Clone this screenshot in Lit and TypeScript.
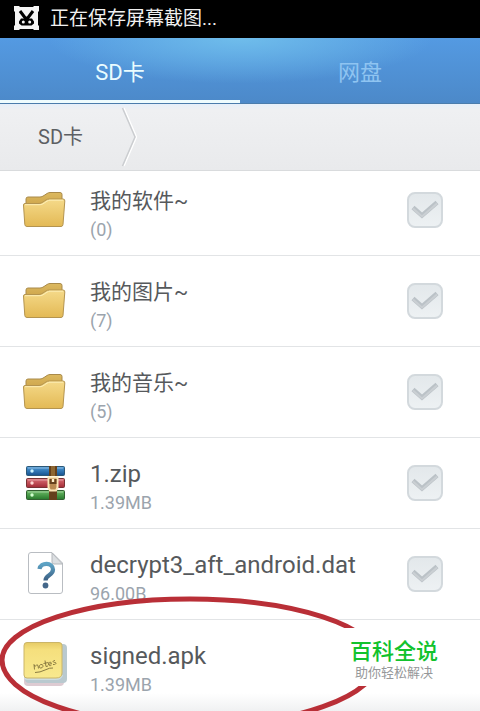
import { LitElement, html, css, svg } from "lit";
import { customElement, property } from "lit/decorators.js";

type Kind = "folder" | "zip" | "unknown" | "notes";

interface Entry {
  name: string;
  info: string;
  kind: Kind;
}

const entries: Entry[] = [
  { name: "我的软件~", info: "(0)", kind: "folder" },
  { name: "我的图片~", info: "(7)", kind: "folder" },
  { name: "我的音乐~", info: "(5)", kind: "folder" },
  { name: "1.zip", info: "1.39MB", kind: "zip" },
  { name: "decrypt3_aft_android.dat", info: "96.00B", kind: "unknown" },
  { name: "signed.apk", info: "1.39MB", kind: "notes" },
];

const folder = svg`
  <defs>
    <linearGradient id="front" x1="0" y1="0" x2="0" y2="1">
      <stop offset="0" stop-color="#f5da8a"/><stop offset="1" stop-color="#e3b955"/>
    </linearGradient>
    <linearGradient id="back" x1="0" y1="0" x2="0" y2="1">
      <stop offset="0" stop-color="#dcb960"/><stop offset="1" stop-color="#c3963b"/>
    </linearGradient>
  </defs>
  <path d="M4 30V13q0-2 2-2H18q2 0 4-1.500l3-2q1.500-1 3-1H38q2 0 2 2V30z" fill="url(#back)" stroke="#a98a4a"/>
  <path d="M1.500 19q0-1.500 1.500-1.500H17q2 0 4-1.500l3-2q1.500-1 3.500-1H41q2 0 1.800 2L41 38.500q-.2 2-2 2H5q-2 0-2.200-2z" fill="url(#front)" stroke="#b4944f"/>
  <path d="M3 18.700H18q2 0 4-1.500l3-2q1.500-1 3-1H41" fill="none" stroke="#fdeeb5"/>`;

const zip = svg`
  <defs>
    <linearGradient id="blue" x1="0" y1="0" x2="0" y2="1"><stop offset="0" stop-color="#4d9bd8"/><stop offset="1" stop-color="#17528f"/></linearGradient>
    <linearGradient id="red" x1="0" y1="0" x2="0" y2="1"><stop offset="0" stop-color="#dc7076"/><stop offset="1" stop-color="#a22b36"/></linearGradient>
    <linearGradient id="green" x1="0" y1="0" x2="0" y2="1"><stop offset="0" stop-color="#6ebd68"/><stop offset="1" stop-color="#26792c"/></linearGradient>
  </defs>
  <g transform="translate(0 2)">
    <rect x="4.500" y="5.500" width="38" height="9" rx="1" fill="url(#blue)" stroke="#2d5877"/>
    <rect x="4.500" y="17.500" width="38" height="9" rx="1" fill="url(#red)" stroke="#773234"/>
    <rect x="4.500" y="29.500" width="38" height="9" rx="1" fill="url(#green)" stroke="#315e30"/>
    <path d="M6 7h35M6 19h35M6 31h35" stroke="#fff" stroke-opacity=".4"/>
    <circle cx="10" cy="10" r="1.700" fill="#c9f3ff"/><circle cx="10" cy="22" r="1.700" fill="#ffd9d4"/><circle cx="10" cy="34" r="1.700" fill="#d2ffd0"/>
    <path d="M27 5h8v10h-8zM27 29h8v10h-8z" fill="#64401c"/>
    <path d="M29 5h4v10h-4z" fill="#8d6632"/>
    <path d="M26.500 16.500h9v10l-1.500 3h-6l-1.500-3z" fill="#b98a50" stroke="#fbe5b5" stroke-width="2"/>
    <path d="M28.500 18v4h5v-4" fill="none" stroke="#65411d" stroke-width="2"/>
    <path d="M31 18v3" stroke="#fff0cc" stroke-width="2"/>
  </g>`;

const unknown = svg`
  <defs>
    <linearGradient id="mark" x1="0" y1="0" x2="0" y2="1"><stop offset="0" stop-color="#5da3c5"/><stop offset="1" stop-color="#3c6084"/></linearGradient>
  </defs>
  <path d="M9 2.500H30L40.500 13V41q0 2.500-2.500 2.500H9q-2.500 0-2.500-2.500V5q0-2.500 2.500-2.500z" fill="#fff" stroke="#b9bdc2"/>
  <path d="M30 3v9q0 2 2 2h8.500z" fill="#dcdfe2" stroke="#b4b8bc"/>
  <path d="M17.500 19c1-7 13.500-7 13.500.500 0 6-7.500 5.500-7.500 11" fill="none" stroke="url(#mark)" stroke-width="4.200"/>
  <circle cx="23.500" cy="35.500" r="2.900" fill="#44678a"/>`;

const notes = svg`
  <defs>
    <linearGradient id="paper" x1="0" y1="0" x2="0" y2="1"><stop offset="0" stop-color="#e6cb66"/><stop offset=".2" stop-color="#f5df7d"/><stop offset="1" stop-color="#f8e98e"/></linearGradient>
  </defs>
  <rect x="2" y="5" width="40" height="40" rx="4" fill="#ddcbd2"/>
  <rect x="3" y="3" width="42" height="39" rx="4" fill="#b9c9cf"/>
  <path d="M2 34h39q-1 5-8 5H5q-3 0-3-3z" fill="#cddde1"/>
  <path d="M5 1.500H37q3 0 3 3V32q0 5-6 5H5q-3 0-3-3V4.500q0-3 3-3z" fill="url(#paper)" stroke="#cbb568"/>
  <path d="M12.500 28.500l-.500-5 1 2q2-3 3-1l.500 3M19 23.500c-2 0-2.500 4 0 3.500 3-.500 2.500-4 0-3.500M23 19.500l1 6 2-.500M21.500 22.500l5-1M26.500 23.500l3-1c0-2-3-1.500-3 .500s2 2 3 1M33 19.500c-3 .200-2 2 0 2s1 2.500-2 2M13 31.500q5 0 10-2.500t8-2" fill="none" stroke="#8b7c42"/>`;

const drawings = { folder, zip, unknown, notes };

@customElement("file-row")
export class FileRow extends LitElement {
  @property({ attribute: false }) entry!: Entry;

  static styles = css`
    :host { display: block; }
    .row {
      display: grid;
      grid-template-columns: 48px 1fr 36px;
      align-items: center;
      column-gap: 20px;
      box-sizing: border-box;
      height: 91px;
      padding: 0 37px 0 22px;
      border-bottom: 1px solid #e2e4e6;
      cursor: pointer;
    }
    .icon { display: block; width: 48px; height: 48px; }
    .text { display: flex; flex-direction: column; min-width: 0; padding-top: 8px; }
    .name { font-size: 24px; line-height: 32px; color: #56595c; white-space: nowrap; }
    .name:lang(zh) { font-size: 21px; }
    .info { font-size: 18px; line-height: 26px; color: #9ba4ad; }
    .tick {
      appearance: none;
      width: 36px;
      height: 36px;
      margin: 0;
      border: 2px solid #d3d9dd;
      border-radius: 8px;
      background: linear-gradient(#e3e8eb, #edf1f3);
    }
    .box { display: grid; }
    .box > * { grid-area: 1 / 1; }
    .check { width: 36px; height: 36px; pointer-events: none; }
  `;

  render() {
    const { name, info, kind } = this.entry;
    return html`
      <label class="row">
        <svg class="icon" viewBox="0 0 48 48" aria-hidden="true">${drawings[kind]}</svg>
        <span class="text">
          <span class="name" lang=${kind === "folder" ? "zh" : "en"}>${name}</span>
          <span class="info">${info}</span>
        </span>
        <span class="box">
          <input class="tick" type="checkbox" />
          <svg class="check" viewBox="0 0 36 36" aria-hidden="true">
            <path d="M6 15.500L15 23.500 30 10.500" fill="none" stroke="#bbc2c7" stroke-width="4.500" />
            <path d="M6 16.500L15 24.500 30 11.500" fill="none" stroke="#cacfd3" stroke-width="2" />
          </svg>
        </span>
      </label>
    `;
  }
}

@customElement("app-root")
export class AppRoot extends LitElement {
  static styles = css`
    :host {
      display: block;
      position: relative;
      min-height: 100vh;
      overflow: hidden;
      background: #fff;
      font-family: Roboto, "Noto Sans CJK SC", sans-serif;
    }
    .status {
      display: flex;
      align-items: center;
      gap: 11px;
      height: 38px;
      padding: 0 14px;
      background: #000;
      color: #f0f0f0;
      font-size: 19px;
      line-height: 36px;
    }
    .badge { width: 25px; height: 26px; margin-bottom: 2px; }
    .tabs {
      display: grid;
      grid-template-columns: 1fr 1fr;
      height: 66px;
      background:
        radial-gradient(ellipse 40% 70% at 50% 0, #6fbdeb, transparent),
        linear-gradient(#549ae2, #4c89c9);
      border-bottom: 1px solid #4a7cac;
      box-sizing: border-box;
    }
    .tab {
      border: 0;
      border-bottom: 3px solid transparent;
      padding: 7px 0 0;
      background: none;
      font: 22px/32px Roboto, "Noto Sans CJK SC", sans-serif;
      color: #8fc4f1;
    }
    .current { color: #eafcff; border-bottom-color: #eefcff; }
    .crumbs {
      position: relative;
      z-index: 1;
      display: flex;
      align-items: center;
      box-sizing: border-box;
      height: 67px;
      padding-left: 38px;
      gap: 38px;
      background: linear-gradient(#e6effa, #eff0f2 6px, #e9eaec);
      border-bottom: 1px solid #d9dbdd;
    }
    .crumb { font-size: 20px; line-height: 28px; color: #5c5f63; text-decoration: none; }
    .chevron { width: 16px; height: 60px; }
    .list { list-style: none; margin: -6px 0 0; padding: 0; }
    .list li:last-child { height: 86px; overflow: hidden; }
    .fade {
      position: absolute;
      inset: auto 0 0;
      height: 18px;
      background: linear-gradient(transparent, #f0f1f2);
    }
    .ring { position: absolute; left: 0; top: 590px; width: 400px; height: 150px; pointer-events: none; }
    .mark {
      position: absolute;
      left: 344px;
      top: 628px;
      display: flex;
      flex-direction: column;
      align-items: center;
      width: 100px;
      height: 58px;
      background: #fff;
    }
    .brand { margin: 10px 0 0; font-size: 22px; line-height: 28px; font-weight: 500; color: #12c22d; }
    .motto { margin: 0; font-size: 13px; line-height: 14px; color: #96989a; white-space: nowrap; }
  `;

  render() {
    return html`
      <header>
        <div class="status">
          <svg class="badge" viewBox="0 0 25 26" aria-hidden="true">
            <path d="M0 1h5l1 1h13l1-1h5v5l-1 1v13l1 1v4h-5l-1-1H6l-1 1H0v-4l1-1V7L0 6z" fill="#f5f5f5" />
            <path d="M6 6l6 8M19 6l-6 8" stroke="#000" stroke-width="3" />
            <path d="M12.500 11.500l2.500 2h3l2 3v2L17.500 20.500h-10L5 18.500v-2l2-3h3z" fill="#000" />
            <circle cx="9.300" cy="17" r="1.500" fill="#f5f5f5" /><circle cx="15.700" cy="17" r="1.500" fill="#f5f5f5" />
          </svg>
          <span>正在保存屏幕截图...</span>
        </div>
        <nav class="tabs">
          <button class="tab current">SD卡</button>
          <button class="tab">网盘</button>
        </nav>
        <nav class="crumbs">
          <a class="crumb" href="#">SD卡</a>
          <svg class="chevron" viewBox="0 0 16 60" aria-hidden="true">
            <path d="M3 1L15.500 30 3 59" fill="none" stroke="#fff" stroke-width="1.500" />
            <path d="M1.500 1L14 30 1.500 59" fill="none" stroke="#cbcdd0" stroke-width="1.500" />
          </svg>
        </nav>
      </header>
      <ul class="list">
        ${entries.map((entry) => html`<li><file-row .entry=${entry}></file-row></li>`)}
      </ul>
      <div class="fade"></div>
      <svg class="ring" viewBox="0 0 400 150" aria-hidden="true">
        <path d="M2 70A188 61 0 0 1 378 70A188 66 0 0 1 2 70z" fill="none" stroke="#b92f37" stroke-width="5" />
      </svg>
      <aside class="mark">
        <p class="brand">百科全说</p>
        <p class="motto">助你轻松解决</p>
      </aside>
    `;
  }
}
